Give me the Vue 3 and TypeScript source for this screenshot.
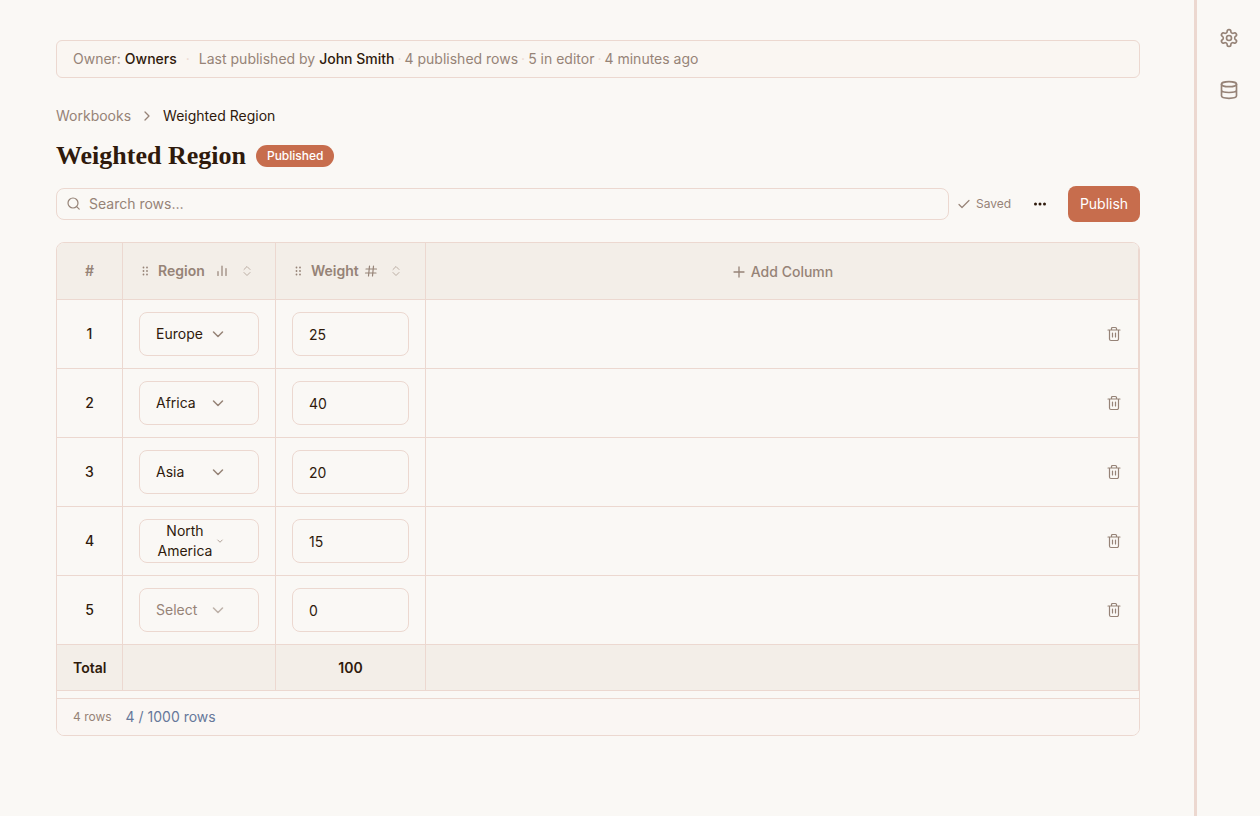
<script setup lang="ts">
import { computed, ref } from 'vue'

interface Row {
  region: string
  weight: number
}

const regions = ['Europe', 'Africa', 'Asia', 'North America']

const rows = ref<Row[]>([
  { region: 'Europe', weight: 25 },
  { region: 'Africa', weight: 40 },
  { region: 'Asia', weight: 20 },
  { region: 'North America', weight: 15 },
  { region: '', weight: 0 },
])

const search = ref('')
const total = computed(() => rows.value.reduce((sum, row) => sum + Number(row.weight), 0))
const filled = computed(() => rows.value.filter((row) => row.region).length)

function removeRow(index: number) {
  rows.value.splice(index, 1)
}
</script>

<template>
  <div class="shell">
    <main class="main">
      <section class="info">
        <span>Owner: <strong>Owners</strong></span>
        <span class="dot wide">·</span>
        <span>Last published by <strong>John Smith</strong></span>
        <span class="dot">·</span>
        <span>4 published rows</span>
        <span class="dot">·</span>
        <span>5 in editor</span>
        <span class="dot">·</span>
        <span>4 minutes ago</span>
      </section>

      <nav class="crumbs" aria-label="Breadcrumb">
        <a href="#">Workbooks</a>
        <svg class="icon" width="14" height="14" viewBox="0 0 14 14"><path d="m5 3 4 4-4 4" stroke-width="1.300" /></svg>
        <span class="current">Weighted Region</span>
      </nav>

      <header class="heading">
        <h1>Weighted Region</h1>
        <span class="badge">Published</span>
      </header>

      <div class="toolbar">
        <label class="search">
          <svg class="icon" width="14" height="14" viewBox="0 0 14 14"><circle cx="6" cy="6" r="5" stroke-width="1.200" /><path d="m9.700 9.700 2.500 2.500" stroke-width="1.200" /></svg>
          <input v-model="search" type="text" placeholder="Search rows…" aria-label="Search rows" />
        </label>
        <span class="saved">
          <svg class="icon" width="14" height="14" viewBox="0 0 14 14"><path d="m2 7.500 3 3L12 3.500" stroke-width="1.200" /></svg>
          Saved
        </span>
        <button class="more" type="button" aria-label="More actions">
          <svg width="16" height="16" viewBox="0 0 16 16" fill="currentColor"><circle cx="3.500" cy="8" r="1.500" /><circle cx="8" cy="8" r="1.500" /><circle cx="12.500" cy="8" r="1.500" /></svg>
        </button>
        <button class="publish" type="button">Publish</button>
      </div>

      <section class="card">
        <table>
          <colgroup>
            <col class="col-index" />
            <col class="col-region" />
            <col class="col-weight" />
            <col />
          </colgroup>
          <thead>
            <tr>
              <th scope="col">#</th>
              <th scope="col">
                <div class="head">
                  <svg class="grip" width="12" height="12" viewBox="0 0 12 12" fill="currentColor"><circle cx="4.500" cy="2.500" r="0.900" /><circle cx="4.500" cy="6" r="0.900" /><circle cx="4.500" cy="9.500" r="0.900" /><circle cx="8" cy="2.500" r="0.900" /><circle cx="8" cy="6" r="0.900" /><circle cx="8" cy="9.500" r="0.900" /></svg>
                  <span class="name region">Region</span>
                  <svg class="icon" width="14" height="14" viewBox="0 0 14 14"><path d="M3 7.500v4M7 2v9.500M11 4.500v7" stroke-width="1.200" /></svg>
                  <button class="sort" type="button" aria-label="Sort by region">
                    <svg class="icon" width="12" height="12" viewBox="0 0 12 12"><path d="m3 4.500 3-3 3 3M3 7.500l3 3 3-3" stroke-width="1" /></svg>
                  </button>
                </div>
              </th>
              <th scope="col">
                <div class="head">
                  <svg class="grip" width="12" height="12" viewBox="0 0 12 12" fill="currentColor"><circle cx="4.500" cy="2.500" r="0.900" /><circle cx="4.500" cy="6" r="0.900" /><circle cx="4.500" cy="9.500" r="0.900" /><circle cx="8" cy="2.500" r="0.900" /><circle cx="8" cy="6" r="0.900" /><circle cx="8" cy="9.500" r="0.900" /></svg>
                  <span class="name">Weight</span>
                  <svg class="icon" width="14" height="14" viewBox="0 0 14 14"><path d="M2 5h10.500M1.500 9h10.500M5.500 2l-1 10M9.500 2l-1 10" stroke-width="1.200" /></svg>
                  <button class="sort" type="button" aria-label="Sort by weight">
                    <svg class="icon" width="12" height="12" viewBox="0 0 12 12"><path d="m3 4.500 3-3 3 3M3 7.500l3 3 3-3" stroke-width="1" /></svg>
                  </button>
                </div>
              </th>
              <th scope="col">
                <button class="add" type="button">
                  <svg class="icon" width="16" height="16" viewBox="0 0 16 16"><path d="M3 8h10M8 3v10" stroke-width="1.300" /></svg>
                  Add Column
                </button>
              </th>
            </tr>
          </thead>
          <tbody>
            <tr v-for="(row, i) in rows" :key="i">
              <td class="index">{{ i + 1 }}</td>
              <td>
                <div class="picker" :class="{ empty: !row.region, long: row.region.length > 8 }">
                  <select v-model="row.region" :aria-label="`Region, row ${i + 1}`">
                    <option value="">Select</option>
                    <option v-for="name in regions" :key="name" :value="name">{{ name }}</option>
                  </select>
                  <svg class="icon chevron" viewBox="0 0 16 16"><path d="m3.500 6 4.500 4.500L12.500 6" stroke-width="1.500" /></svg>
                </div>
              </td>
              <td>
                <input v-model="row.weight" class="weight" type="text" inputmode="numeric" :aria-label="`Weight, row ${i + 1}`" />
              </td>
              <td>
                <div class="actions">
                  <button class="trash" type="button" :aria-label="`Delete row ${i + 1}`" @click="removeRow(i)">
                    <svg class="icon" width="16" height="16" viewBox="0 0 16 16"><path d="M2 4h12M3.500 4v9a1.500 1.500 0 0 0 1.500 1.500h6a1.500 1.500 0 0 0 1.500-1.500V4M5.500 4V2.500a1 1 0 0 1 1-1h3a1 1 0 0 1 1 1V4M6.500 7v4M9.500 7v4" stroke-width="1.200" /></svg>
                  </button>
                </div>
              </td>
            </tr>
          </tbody>
          <tfoot>
            <tr>
              <th scope="row">Total</th>
              <td></td>
              <td>{{ total }}</td>
              <td></td>
            </tr>
          </tfoot>
        </table>
        <footer class="status">
          <span class="count">{{ filled }} rows</span>
          <span class="quota">{{ filled }} / 1000 rows</span>
        </footer>
      </section>
    </main>

    <aside class="rail">
      <button type="button" aria-label="Settings">
        <svg class="icon" width="20" height="20" viewBox="0 0 24 24"><path d="M12.220 2h-.440a2 2 0 0 0-2 2v.180a2 2 0 0 1-1 1.730l-.430.250a2 2 0 0 1-2 0l-.150-.080a2 2 0 0 0-2.730.730l-.220.380a2 2 0 0 0 .730 2.730l.150.100a2 2 0 0 1 1 1.720v.510a2 2 0 0 1-1 1.740l-.150.090a2 2 0 0 0-.730 2.730l.220.380a2 2 0 0 0 2.730.730l.150-.080a2 2 0 0 1 2 0l.430.250a2 2 0 0 1 1 1.730V20a2 2 0 0 0 2 2h.440a2 2 0 0 0 2-2v-.180a2 2 0 0 1 1-1.730l.430-.250a2 2 0 0 1 2 0l.150.080a2 2 0 0 0 2.730-.730l.220-.390a2 2 0 0 0-.730-2.730l-.150-.080a2 2 0 0 1-1-1.740v-.500a2 2 0 0 1 1-1.740l.150-.090a2 2 0 0 0 .730-2.730l-.220-.380a2 2 0 0 0-2.730-.730l-.150.080a2 2 0 0 1-2 0l-.430-.250a2 2 0 0 1-1-1.730V4a2 2 0 0 0-2-2z" /><circle cx="12" cy="12" r="3" /></svg>
      </button>
      <button type="button" aria-label="Data">
        <svg class="icon" width="20" height="20" viewBox="0 0 24 24"><ellipse cx="12" cy="5" rx="9" ry="3" /><path d="M3 5v14c0 1.700 4 3 9 3s9-1.300 9-3V5M3 12c0 1.700 4 3 9 3s9-1.300 9-3" /></svg>
      </button>
    </aside>
  </div>
</template>

<style>
body {
  background: #faf8f5;
}
</style>

<style scoped>
.shell {
  --ink: #2f1a0c;
  --muted: #968377;
  --line: #ecd8d0;
  --accent: #c76d4d;
  --band: #f3eee8;
  display: flex;
  min-height: 100vh;
  background: #faf8f5;
  color: var(--ink);
  font: 14px/20px Inter, "Liberation Sans", sans-serif;
}

.shell *,
.shell {
  box-sizing: border-box;
}

button,
input,
select {
  margin: 0;
  padding: 0;
  border: 0;
  background: none;
  color: inherit;
  font: inherit;
}

button {
  display: inline-flex;
  align-items: center;
  justify-content: center;
  cursor: pointer;
}

svg {
  flex: none;
}

.icon {
  fill: none;
  stroke: currentColor;
  stroke-width: 2;
  stroke-linecap: round;
  stroke-linejoin: round;
}

.main {
  flex: 1;
  min-width: 0;
  padding: 40px 54px 40px 56px;
}

.info {
  display: flex;
  align-items: center;
  gap: 3px;
  height: 38px;
  padding: 0 16px;
  border: 1px solid var(--line);
  border-radius: 6px;
  background: #faf6f2;
  color: var(--muted);
}

.info strong {
  color: var(--ink);
  font-weight: 500;
}

.dot {
  color: var(--line);
}

.dot.wide {
  padding: 0 6px;
}

.crumbs {
  display: flex;
  align-items: center;
  gap: 9px;
  margin-top: 28px;
  color: var(--muted);
}

.crumbs a {
  color: inherit;
  text-decoration: none;
}

.current {
  color: var(--ink);
}

.heading {
  display: flex;
  align-items: center;
  gap: 10px;
  height: 32px;
  margin-top: 14px;
}

h1 {
  margin: 0;
  font: bold 26px/32px "Liberation Serif", serif;
}

.badge {
  padding: 0 11px;
  border-radius: 11px;
  background: var(--accent);
  color: #fff;
  font-size: 12px;
  font-weight: 500;
  line-height: 22px;
}

.toolbar {
  display: flex;
  align-items: center;
  height: 36px;
  margin-top: 14px;
}

.search {
  display: flex;
  flex: 1;
  align-items: center;
  gap: 8px;
  height: 32px;
  padding: 0 10px;
  border: 1px solid var(--line);
  border-radius: 8px;
  color: var(--muted);
}

.search input {
  flex: 1;
  outline: none;
}

.search input::placeholder {
  color: var(--muted);
  opacity: 1;
}

.saved {
  display: flex;
  align-items: center;
  gap: 5px;
  width: 71px;
  padding-left: 8px;
  color: var(--muted);
  font-size: 12px;
}

.more {
  width: 40px;
  height: 32px;
}

.publish {
  width: 72px;
  height: 36px;
  margin-left: 8px;
  border-radius: 8px;
  background: var(--accent);
  color: #fff;
}

.card {
  margin-top: 20px;
  border: 1px solid var(--line);
  border-radius: 8px;
  overflow: hidden;
}

table {
  width: 100%;
  border-spacing: 0;
  table-layout: fixed;
}

.col-index {
  width: 66px;
}

.col-region {
  width: 153px;
}

.col-weight {
  width: 150px;
}

th,
td {
  padding: 0 16px;
  border-right: 1px solid var(--line);
  border-bottom: 1px solid var(--line);
  text-align: center;
}

th {
  font-weight: 600;
}

thead th {
  height: 57px;
  background: var(--band);
  color: var(--muted);
}

.head {
  display: flex;
  align-items: center;
  gap: 5px;
}

.name {
  margin-left: 2px;
}

.name.region {
  margin-right: 5px;
}

.sort {
  width: 12px;
  height: 20px;
  margin-left: 7px;
  opacity: 0.6;
}

.add {
  gap: 4px;
  font-weight: 500;
  vertical-align: middle;
}

tbody td {
  height: 69px;
}

.index {
  font-weight: 500;
}

.picker {
  display: grid;
  align-items: center;
}

.picker > * {
  grid-area: 1 / 1;
}

.picker select {
  width: 100%;
  height: 44px;
  padding: 0 44px 0 16px;
  border: 1px solid var(--line);
  border-radius: 8px;
  appearance: none;
  white-space: normal;
}

.picker.long select {
  text-align: center;
}

.picker.empty select {
  color: var(--muted);
}

.chevron {
  width: 16px;
  height: 16px;
  margin-left: 71px;
  color: var(--muted);
  pointer-events: none;
}

.empty .chevron {
  opacity: 0.6;
}

.long .chevron {
  width: 8px;
  height: 8px;
  margin-left: 77px;
}

.weight {
  display: block;
  width: 100%;
  height: 44px;
  padding: 0 16px;
  border: 1px solid var(--line);
  border-radius: 8px;
  line-height: 20px;
}

.actions {
  display: flex;
  justify-content: flex-end;
}

.trash {
  width: 16px;
  height: 16px;
  color: var(--muted);
}

tfoot th,
tfoot td {
  height: 46px;
  background: var(--band);
  font-weight: 600;
}

.status {
  display: flex;
  align-items: center;
  gap: 14px;
  height: 37px;
  margin-top: 7px;
  padding: 0 16px;
  border-top: 1px solid var(--line);
  background: #faf6f3;
}

.count {
  color: var(--muted);
  font-size: 12px;
}

.quota {
  color: #66789a;
}

.rail {
  display: flex;
  flex-direction: column;
  align-items: center;
  gap: 16px;
  width: 66px;
  padding-top: 20px;
  border-left: 3px solid var(--line);
  color: var(--muted);
}

.rail button {
  width: 36px;
  height: 36px;
}
</style>
